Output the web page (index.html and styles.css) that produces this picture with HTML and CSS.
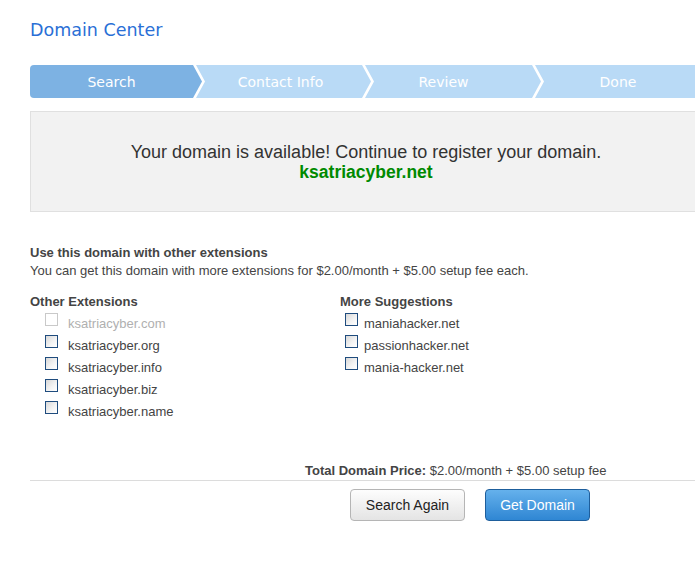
FILE: index.html
```html
<!DOCTYPE html>
<html>
<head>
<meta charset="utf-8">
<title>Domain Center</title>
<link rel="stylesheet" href="styles.css">
</head>
<body>
<div class="page">
  <h1 class="title">Domain Center</h1>
  <div class="steps">
    <div class="step step-active">Search</div>
    <div class="step step-contact">Contact Info</div>
    <div class="step step-review">Review</div>
    <div class="step step-last">Done</div>
  </div>
  <div class="notice">
    <div class="notice-text">Your domain is available! Continue to register your domain.</div>
    <div class="notice-domain">ksatriacyber.net</div>
  </div>
  <div class="section">
    <div class="heading">Use this domain with other extensions</div>
    <div class="sub">You can get this domain with more extensions for $2.00/month + $5.00 setup fee each.</div>
    <div class="cols">
      <div class="col col-left">
        <div class="heading col-heading">Other Extensions</div>
        <label class="row row-disabled"><input type="checkbox" class="cb" disabled><span>ksatriacyber.com</span></label>
        <label class="row"><input type="checkbox" class="cb"><span>ksatriacyber.org</span></label>
        <label class="row"><input type="checkbox" class="cb"><span>ksatriacyber.info</span></label>
        <label class="row"><input type="checkbox" class="cb"><span>ksatriacyber.biz</span></label>
        <label class="row"><input type="checkbox" class="cb"><span>ksatriacyber.name</span></label>
      </div>
      <div class="col col-right">
        <div class="heading col-heading">More Suggestions</div>
        <label class="row"><input type="checkbox" class="cb"><span>maniahacker.net</span></label>
        <label class="row"><input type="checkbox" class="cb"><span>passionhacker.net</span></label>
        <label class="row"><input type="checkbox" class="cb"><span>mania-hacker.net</span></label>
      </div>
    </div>
  </div>
  <div class="total"><b>Total Domain Price:</b> $2.00/month + $5.00 setup fee</div>
  <div class="actions">
    <button class="btn btn-default">Search Again</button>
    <button class="btn btn-primary">Get Domain</button>
  </div>
</div>
</body>
</html>
```
FILE: styles.css
```css
html, body {
  margin: 0;
  padding: 0;
  background: #fff;
}
body {
  font-family: "Liberation Sans", Arial, sans-serif;
  font-size: 13px;
  color: #444;
  overflow: hidden;
}
.page {
  width: 672px;
  padding: 18px 0 0 30px;
}
.title {
  margin: 0;
  font-family: "DejaVu Sans", Verdana, sans-serif;
  font-weight: normal;
  font-size: 17.5px;
  line-height: 25px;
  color: #2a6fd6;
}
.steps {
  display: flex;
  height: 33px;
  margin-top: 22px;
}
.step {
  flex: 0 0 175px;
  margin-left: -6px;
  box-sizing: border-box;
  padding: 0 9px;
  display: flex;
  align-items: center;
  justify-content: center;
  background: #b9daf6;
  color: #fff;
  font-family: "DejaVu Sans", Verdana, sans-serif;
  font-size: 14px;
  clip-path: polygon(0 0, calc(100% - 9px) 0, 100% 50%, calc(100% - 9px) 100%, 0 100%, 9px 50%);
}
.step-active {
  flex-basis: 172px;
  margin-left: 0;
  padding-left: 0;
  background: #7db2e3;
  border-radius: 4px 0 0 4px;
  clip-path: polygon(0 0, calc(100% - 9px) 0, 100% 50%, calc(100% - 9px) 100%, 0 100%);
}
.step-contact {
  padding-right: 15px;
}
.step-review {
  flex-basis: 176px;
  padding-right: 28px;
}
.step-last {
  flex: 1 1 auto;
  padding-right: 10px;
  clip-path: polygon(0 0, 100% 0, 100% 100%, 0 100%, 9px 50%);
}
.notice {
  margin-top: 13px;
  height: 101px;
  box-sizing: border-box;
  background: #f2f2f2;
  border: 1px solid #e0e0e0;
  display: flex;
  flex-direction: column;
  justify-content: center;
  align-items: center;
}
.notice-text {
  font-size: 18px;
  line-height: 20px;
  color: #333;
}
.notice-domain {
  font-size: 17.5px;
  line-height: 20px;
  font-weight: bold;
  color: #008a00;
}
.section {
  margin-top: 32px;
}
.heading {
  font-weight: bold;
  line-height: 18px;
  color: #444;
}
.sub {
  line-height: 18px;
}
.cols {
  display: flex;
  margin-top: 13px;
}
.col-left {
  width: 310px;
}
.col-heading {
  margin-bottom: 2px;
}
.row {
  display: flex;
  align-items: flex-start;
  height: 22px;
  padding-left: 15px;
  line-height: 22px;
}
.col-right .row {
  padding-left: 5px;
}
.col-right .cb {
  margin-right: 6px;
}
.row-disabled {
  color: #b0b0b0;
}
.cb {
  appearance: none;
  -webkit-appearance: none;
  margin: 0 10px 0 0;
  width: 13px;
  height: 13px;
  box-sizing: border-box;
  border: 1px solid #1f4c7e;
  background: linear-gradient(135deg, #d8d8d8 0%, #f4f4f4 60%, #ffffff 100%);
  flex: 0 0 13px;
}
.cb:disabled {
  border-color: #c9c9c9;
  background: #fff;
}
.total {
  margin-top: 39px;
  padding-left: 275px;
  line-height: 18px;
  border-bottom: 1px solid #dcdcdc;
}
.actions {
  display: flex;
  gap: 20px;
  padding: 8px 0 0 320px;
}
.btn {
  height: 32px;
  box-sizing: border-box;
  font-family: "Liberation Sans", Arial, sans-serif;
  font-size: 14px;
  border-radius: 4px;
  padding: 0;
  cursor: pointer;
}
.btn-default {
  width: 115px;
  color: #222;
  border: 1px solid #b5b5b5;
  background: linear-gradient(#fdfdfd, #e4e4e4);
}
.btn-primary {
  width: 105px;
  color: #fff;
  border: 1px solid #1e5e9c;
  background: linear-gradient(#65b1ec, #2f86d3);
}
```
